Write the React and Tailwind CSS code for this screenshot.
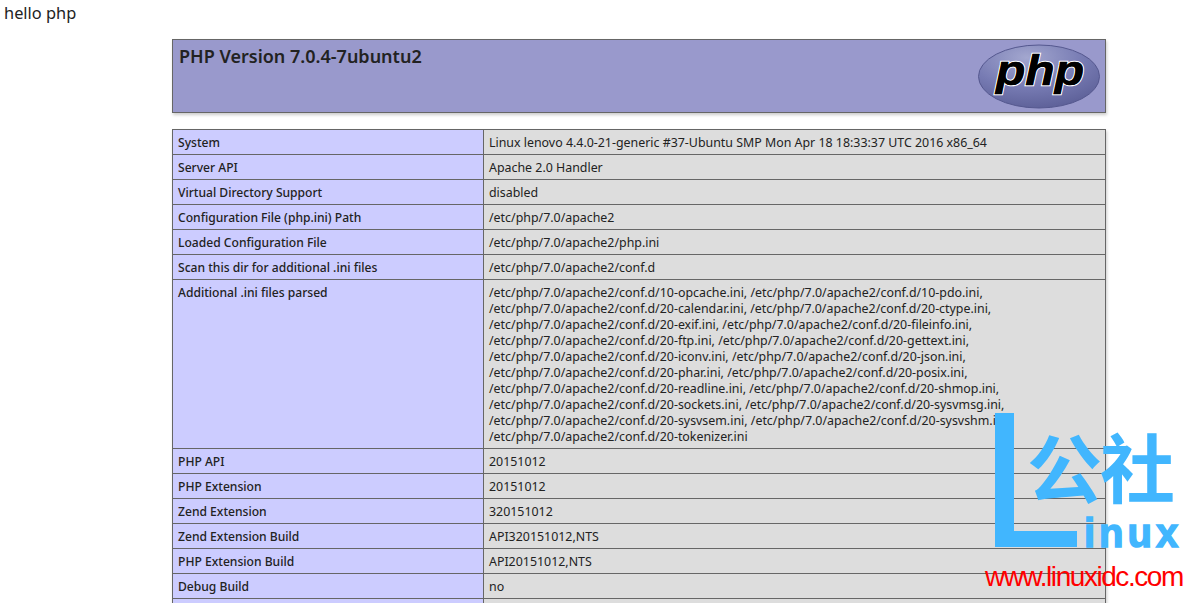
const rows = [
  ["System", "Linux lenovo 4.4.0-21-generic #37-Ubuntu SMP Mon Apr 18 18:33:37 UTC 2016 x86_64"],
  ["Server API", "Apache 2.0 Handler"],
  ["Virtual Directory Support", "disabled"],
  ["Configuration File (php.ini) Path", "/etc/php/7.0/apache2"],
  ["Loaded Configuration File", "/etc/php/7.0/apache2/php.ini"],
  ["Scan this dir for additional .ini files", "/etc/php/7.0/apache2/conf.d"],
  ["Additional .ini files parsed", [
    "/etc/php/7.0/apache2/conf.d/10-opcache.ini, /etc/php/7.0/apache2/conf.d/10-pdo.ini,",
    "/etc/php/7.0/apache2/conf.d/20-calendar.ini, /etc/php/7.0/apache2/conf.d/20-ctype.ini,",
    "/etc/php/7.0/apache2/conf.d/20-exif.ini, /etc/php/7.0/apache2/conf.d/20-fileinfo.ini,",
    "/etc/php/7.0/apache2/conf.d/20-ftp.ini, /etc/php/7.0/apache2/conf.d/20-gettext.ini,",
    "/etc/php/7.0/apache2/conf.d/20-iconv.ini, /etc/php/7.0/apache2/conf.d/20-json.ini,",
    "/etc/php/7.0/apache2/conf.d/20-phar.ini, /etc/php/7.0/apache2/conf.d/20-posix.ini,",
    "/etc/php/7.0/apache2/conf.d/20-readline.ini, /etc/php/7.0/apache2/conf.d/20-shmop.ini,",
    "/etc/php/7.0/apache2/conf.d/20-sockets.ini, /etc/php/7.0/apache2/conf.d/20-sysvmsg.ini,",
    "/etc/php/7.0/apache2/conf.d/20-sysvsem.ini, /etc/php/7.0/apache2/conf.d/20-sysvshm.ini,",
    "/etc/php/7.0/apache2/conf.d/20-tokenizer.ini",
  ]],
  ["PHP API", "20151012"],
  ["PHP Extension", "20151012"],
  ["Zend Extension", "320151012"],
  ["Zend Extension Build", "API320151012,NTS"],
  ["PHP Extension Build", "API20151012,NTS"],
  ["Debug Build", "no"],
  ["Thread Safety", "disabled"],
];

function PhpLogo() {
  return (
    <svg width="122" height="65" viewBox="0 0 122 65" className="shrink-0">
      <defs>
        <radialGradient id="phpEllipse" cx="0.4" cy="0.2" r="0.85">
          <stop offset="0" stopColor="#a3a7cf" />
          <stop offset="0.55" stopColor="#777bb3" />
          <stop offset="1" stopColor="#5b5e96" />
        </radialGradient>
      </defs>
      <ellipse cx="61" cy="32.5" rx="60.5" ry="31.5" fill="url(#phpEllipse)" stroke="#55588f" strokeWidth="1" />
      <text x="18" y="41" textLength="88" lengthAdjust="spacingAndGlyphs" fontFamily="'Liberation Sans', sans-serif" fontWeight="700" fontStyle="italic" fontSize="43" fill="#000" stroke="#fff" strokeWidth="2.6" paintOrder="stroke">php</text>
      <text x="18" y="41" textLength="88" lengthAdjust="spacingAndGlyphs" fontFamily="'Liberation Sans', sans-serif" fontWeight="700" fontStyle="italic" fontSize="43" fill="#000" stroke="#000" strokeWidth="0.6" aria-hidden="true">php</text>
    </svg>
  );
}

export default function App() {
  return (
    <div className="relative h-[603px] w-[1184px] overflow-hidden bg-white font-['Noto_Sans',sans-serif] text-[#222]">
      <p className="pl-1 pt-[3px] text-[16.4px] leading-[20px]">hello php</p>

      <div className="ml-[172px] mt-[16px] w-[934px]">
        <div className="flex h-[74px] justify-between border border-[#666] bg-[#9999cc] pl-[6px] pr-[5px] pt-[4px] shadow-[1px_2px_3px_#ccc]">
          <h1 className="text-[18px] font-semibold leading-[24px]">PHP Version 7.0.4-7ubuntu2</h1>
          <PhpLogo />
        </div>

        <table className="mt-4 w-[933px] table-fixed border-collapse text-[12.4px] leading-[16px] shadow-[1px_2px_3px_#ccc]">
          <colgroup>
            <col className="w-[311px]" />
            <col className="w-[622px]" />
          </colgroup>
          <tbody>
            {rows.map(([label, value]) => (
              <tr key={label}>
                <td className="border border-[#666] bg-[#ccccff] px-[5px] pb-[3px] pt-[5px] align-top text-[12.1px] font-medium">{label}</td>
                <td className="border border-[#666] bg-[#dddddd] px-[5px] pb-[3px] pt-[5px] align-top whitespace-nowrap">
                  {Array.isArray(value) ? value.map((l) => <div key={l}>{l}</div>) : value}
                </td>
              </tr>
            ))}
          </tbody>
        </table>
      </div>

      <div className="absolute left-[985px] top-[413px] flex w-[199px] flex-col">
        <div className="ml-[10px] flex h-[134px]">
          <div className="h-full w-[19px] bg-[#41b6fe]" />
          <div className="flex flex-col justify-between">
            <div className="ml-[13px] mt-[7px] whitespace-nowrap font-['Noto_Sans_CJK_SC',sans-serif] text-[75px] font-bold leading-[90px] tracking-[-2px] text-[#41b6fe]">公社</div>
            <div className="flex items-end">
              <div className="h-[16px] w-[63px] bg-[#41b6fe]" />
              <div className="-mb-[6px] ml-[7px] font-['Liberation_Sans',sans-serif] text-[40px] font-bold leading-[40px] tracking-[4px] text-[#41b6fe] [-webkit-text-stroke:1.5px_#41b6fe]">inux</div>
            </div>
          </div>
        </div>
        <div className="mt-[13px] whitespace-nowrap font-['Liberation_Sans',sans-serif] text-[28px] leading-[34px] tracking-[-1.45px] text-[#ff0000]">www.linuxidc.com</div>
      </div>
    </div>
  );
}
